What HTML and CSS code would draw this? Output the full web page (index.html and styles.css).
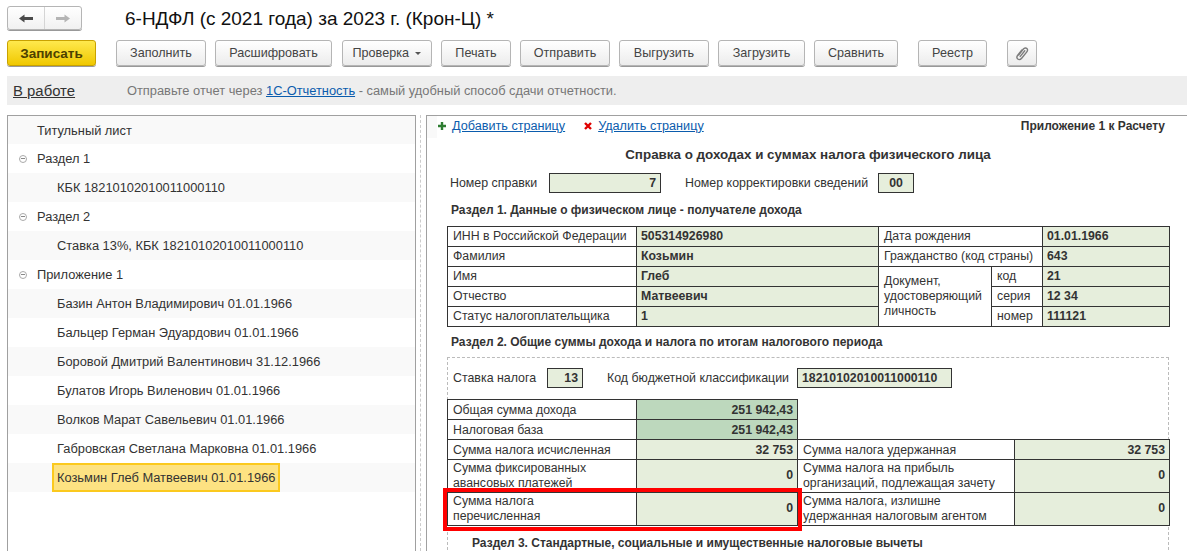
FILE: index.html
```html
<!DOCTYPE html>
<html lang="ru">

<head>
    <meta charset="utf-8">
    <title>6-НДФЛ</title>
    <link rel="stylesheet" href="styles.css">
</head>

<body>
    <div class="title-row">
        <div class="nav-group">
            <div class="nav-btn">
                <svg width="14" height="9" viewBox="0 0 14 9"><path d="M0 4.5 L5.5 0.5 V3 H14 V6 H5.5 V8.5 Z" fill="#4a4a4a"/></svg>
            </div>
            <div class="nav-btn">
                <svg width="14" height="9" viewBox="0 0 14 9"><path d="M14 4.5 L8.5 0.5 V3 H0 V6 H8.5 V8.5 Z" fill="#b4b4b4"/></svg>
            </div>
        </div>
        <div class="doc-title">6-НДФЛ (с 2021 года) за 2023 г. (Крон-Ц) *</div>
    </div>

    <div class="command-bar">
        <button class="btn btn-save">Записать</button>
        <button class="btn w-fill">Заполнить</button>
        <button class="btn w-decode">Расшифровать</button>
        <button class="btn w-check">Проверка <span class="caret"></span></button>
        <button class="btn w-print">Печать</button>
        <button class="btn w-send">Отправить</button>
        <button class="btn w-unload">Выгрузить</button>
        <button class="btn w-load">Загрузить</button>
        <button class="btn w-compare">Сравнить</button>
        <button class="btn w-registry">Реестр</button>
        <button class="btn w-clip">
            <svg width="14" height="15" viewBox="0 0 16 17"><path d="M4.2 10.2 L9.6 3.4 C10.8 1.9 12.6 1.8 13.6 2.8 C14.7 3.9 14.4 5.5 13.3 6.9 L7.6 13.9 C6.4 15.4 4.5 15.8 3.2 14.8 C1.9 13.7 2 11.9 3.1 10.5 L7.9 4.5 M6 11.8 L11.2 5.3" fill="none" stroke="#7c7c7c" stroke-width="1.6" stroke-linecap="round"/></svg>
        </button>
    </div>

    <div class="info-bar">
        <a class="state-link" href="#">В работе</a>
        <span class="info-text">Отправьте отчет через <a href="#">1С-Отчетность</a> - самый удобный способ сдачи отчетности.</span>
    </div>

    <div class="workspace">
        <div class="tree-panel">
            <div class="tree-row">Титульный лист</div>
            <div class="tree-row"><span class="collapse"></span>Раздел 1</div>
            <div class="tree-row child">КБК 18210102010011000110</div>
            <div class="tree-row"><span class="collapse"></span>Раздел 2</div>
            <div class="tree-row child">Ставка 13%, КБК 18210102010011000110</div>
            <div class="tree-row"><span class="collapse"></span>Приложение 1</div>
            <div class="tree-row child">Базин Антон Владимирович 01.01.1966</div>
            <div class="tree-row child">Бальцер Герман Эдуардович 01.01.1966</div>
            <div class="tree-row child">Боровой Дмитрий Валентинович 31.12.1966</div>
            <div class="tree-row child">Булатов Игорь Виленович 01.01.1966</div>
            <div class="tree-row child">Волков Марат Савельевич 01.01.1966</div>
            <div class="tree-row child">Габровская Светлана Марковна 01.01.1966</div>
            <div class="tree-row child"><span class="selected">Козьмин Глеб Матвеевич 01.01.1966</span></div>
        </div>

        <div class="splitter"></div>

        <div class="report-panel">
            <div class="page-actions">
                <span class="corner-cell"></span>
                <svg class="act-icon" width="8" height="8" viewBox="0 0 8 8"><path d="M2.8 0H5.2V2.8H8V5.2H5.2V8H2.8V5.2H0V2.8H2.8Z" fill="#2e7d32"/></svg>
                <a href="#">Добавить страницу</a>
                <svg class="act-icon del-icon" width="8" height="8" viewBox="0 0 8 8"><path d="M1 1 L7 7 M7 1 L1 7" stroke="#e00000" stroke-width="2.4"/></svg>
                <a href="#">Удалить страницу</a>
                <span class="appendix">Приложение 1 к Расчету</span>
            </div>

            <div class="report-title">Справка о доходах и суммах налога физического лица</div>

            <div class="field-row first-fields">
                <span class="num-label">Номер справки</span>
                <span class="input num-input">7</span>
                <span class="corr-label">Номер корректировки сведений</span>
                <span class="input corr-input">00</span>
            </div>

            <div class="section-title">Раздел 1. Данные о физическом лице - получателе дохода</div>

            <table class="grid person">
                <colgroup>
                    <col class="c1"><col class="c2"><col class="c3"><col class="c4"><col class="c5">
                </colgroup>
                <tr><td>ИНН в Российской Федерации</td><td class="val">505314926980</td><td colspan="2">Дата рождения</td><td class="val">01.01.1966</td></tr>
                <tr><td>Фамилия</td><td class="val">Козьмин</td><td colspan="2">Гражданство (код страны)</td><td class="val">643</td></tr>
                <tr><td>Имя</td><td class="val">Глеб</td><td rowspan="3">Документ,<br>удостоверяющий<br>личность</td><td>код</td><td class="val">21</td></tr>
                <tr><td>Отчество</td><td class="val">Матвеевич</td><td>серия</td><td class="val">12 34</td></tr>
                <tr><td>Статус налогоплательщика</td><td class="val">1</td><td>номер</td><td class="val">111121</td></tr>
            </table>

            <div class="section-title second">Раздел 2. Общие суммы дохода и налога по итогам налогового периода</div>

            <div class="dashed-box">
                <div class="field-row rate-fields">
                    <span class="rate-label">Ставка налога</span>
                    <span class="input rate-input">13</span>
                    <span class="kbk-label">Код бюджетной классификации</span>
                    <span class="input kbk-input">18210102010011000110</span>
                </div>

                <table class="grid totals">
                    <colgroup>
                        <col class="t1"><col class="t2"><col class="t3"><col class="t4">
                    </colgroup>
                    <tr><td>Общая сумма дохода</td><td class="val dark num">251 942,43</td><td class="blank" colspan="2"></td></tr>
                    <tr><td>Налоговая база</td><td class="val dark num">251 942,43</td><td class="blank" colspan="2"></td></tr>
                    <tr><td>Сумма налога исчисленная</td><td class="val num">32 753</td><td>Сумма налога удержанная</td><td class="val num">32 753</td></tr>
                    <tr class="tall"><td>Сумма фиксированных<br>авансовых платежей</td><td class="val num">0</td><td>Сумма налога на прибыль<br>организаций, подлежащая зачету</td><td class="val num">0</td></tr>
                    <tr class="tall"><td>Сумма налога<br>перечисленная</td><td class="val num">0</td><td>Сумма налога, излишне<br>удержанная налоговым агентом</td><td class="val num">0</td></tr>
                </table>

                <div class="section-title third">Раздел 3. Стандартные, социальные и имущественные налоговые вычеты</div>
                <div class="red-frame"></div>
            </div>
        </div>
    </div>
</body>

</html>
```

FILE: styles.css
```css
html, body {
    height: 100%;
}

body {
    margin: 0;
    overflow: hidden;
    font-family: 'Liberation Sans', Arial, sans-serif;
    font-size: 12.3px;
    color: #333;
    background: white;
    display: flex;
    flex-direction: column;
}

a {
    color: #0b5cad;
}

.title-row {
    display: flex;
    align-items: center;
    height: 24px;
    margin: 6px 0 0 7px;
}

.nav-group {
    display: flex;
    width: 73px;
    height: 22px;
    border: 1px solid #b5b5b5;
    border-radius: 3px;
    box-shadow: 0 1px 0 #999;
    background: linear-gradient(#fff, #f1f1f1);
}

.nav-btn {
    flex: 1;
    display: flex;
    align-items: center;
    justify-content: center;
}

.nav-btn:first-child {
    border-right: 1px solid #d5d5d5;
}

.doc-title {
    margin: 2px 0 0 43px;
    font-size: 19px;
    color: #111;
}

.command-bar {
    display: flex;
    height: 26px;
    margin: 10px 0 0 7px;
}

.btn {
    height: 26px;
    padding: 0;
    margin-right: 9px;
    border: 1px solid #b5b5b5;
    border-radius: 3px;
    box-shadow: 0 1px 0 #999;
    background: linear-gradient(#fff, #ececec);
    font-family: inherit;
    font-size: 12.6px;
    color: #444;
}

.btn-save {
    width: 89px;
    margin-right: 20px;
    border-color: #c9a200;
    background: linear-gradient(#ffe94d, #f0c800);
    font-size: 13.5px;
    font-weight: bold;
    color: #4d4100;
}

.w-fill { width: 90px; }
.w-decode { width: 117px; margin-right: 10px; }
.w-check { width: 90px; }
.w-print { width: 70px; }
.w-send { width: 90px; }
.w-unload { width: 90px; }
.w-load { width: 87px; }
.w-compare { width: 84px; margin-right: 20px; }
.w-registry { width: 69px; margin-right: 20px; }
.w-clip { width: 30px; display: flex; align-items: center; justify-content: center; }

.caret {
    display: inline-block;
    margin-left: 3px;
    border: 3px solid transparent;
    border-top-color: #555;
    border-bottom: 0;
    vertical-align: middle;
}

.info-bar {
    display: flex;
    align-items: center;
    height: 29px;
    margin: 10px 0 0 7px;
    padding-left: 6px;
    background: #eeeeee;
}

.state-link {
    width: 114px;
    font-size: 14.9px;
    color: #333;
}

.info-text {
    font-size: 12.85px;
    color: #777;
}

.workspace {
    flex: 1;
    display: flex;
    margin: 10px 0 0 7px;
    min-height: 0;
}

.tree-panel {
    width: 407px;
    border: 1px solid #a0a0a0;
    border-bottom: 0;
    font-size: 12.85px;
}

.tree-row {
    display: flex;
    align-items: center;
    height: 29px;
    padding-left: 29px;
}

.tree-row:first-child {
    height: 28px;
}

.tree-row:nth-child(odd) {
    background: #f9f9f9;
}

.tree-row.child {
    padding-left: 49px;
}

.collapse {
    position: relative;
    width: 8px;
    height: 8px;
    margin: 0 10px 0 -18px;
    border: 1px solid #aaa;
    border-radius: 50%;
    box-sizing: border-box;
}

.collapse::after {
    content: "";
    position: absolute;
    left: 1px;
    right: 1px;
    top: 2px;
    height: 1px;
    background: #888;
}

.selected {
    margin-left: -5px;
    padding: 0 3px;
    height: 29px;
    line-height: 25px;
    box-sizing: border-box;
    border: 2px solid #fbc91e;
    background: #fde282;
}

.splitter {
    width: 0;
    margin: 0 5px 0 4px;
    border-left: 1px dashed #ccc;
}

.report-panel {
    flex: 1;
    min-width: 0;
    padding-left: 20px;
    border-top: 1px solid #a0a0a0;
    border-left: 1px solid #a0a0a0;
    overflow: hidden;
}

.page-actions {
    display: flex;
    align-items: center;
    height: 19px;
    margin-left: -20px;
    padding-right: 22px;
    font-size: 12.65px;
}

.corner-cell {
    align-self: flex-start;
    flex: none;
    width: 10px;
    height: 22px;
    background: #f9f9f9;
}

.act-icon {
    flex: none;
    margin: 0 6px 0 0;
}

.page-actions .act-icon:nth-child(2) {
    margin-left: 1px;
}

.del-icon {
    margin-left: 19px;
}

.appendix {
    margin-left: auto;
    font-size: 12px;
    font-weight: bold;
}

.report-title {
    width: 722px;
    margin-top: 12px;
    text-align: center;
    font-size: 13.4px;
    line-height: 16px;
    font-weight: bold;
}

.field-row {
    display: flex;
    align-items: center;
    font-size: 12.4px;
}

.first-fields {
    margin: 10px 0 0 3px;
}

.num-label { width: 99px; }
.corr-label { width: 193px; margin-left: 24px; }

.input {
    flex: none;
    height: 20px;
    box-sizing: border-box;
    border: 1px solid #333;
    background: #e6eedc;
    font-size: 12.3px;
    font-weight: bold;
    padding: 0 4px;
    line-height: 18px;
}

.num-input {
    width: 112px;
    text-align: right;
}

.corr-input {
    width: 36px;
    text-align: center;
}

.section-title {
    margin: 10px 0 0 4px;
    font-size: 12px;
    line-height: 14px;
    font-weight: bold;
}

.grid {
    table-layout: fixed;
    border-collapse: collapse;
    width: 722px;
}

.grid td {
    height: 20px;
    box-sizing: border-box;
    padding: 0 4px 0 5px;
    border: 1px solid #333;
    line-height: 15px;
}

.grid td.val {
    padding-left: 4px;
}

.person {
    margin-top: 9px;
}

.c1 { width: 189px; }
.c2 { width: 242px; }
.c3 { width: 113px; }
.c4 { width: 51px; }
.c5 { width: 127px; }

.val {
    background: #e6eedc;
    font-weight: bold;
}

.dark {
    background: #bdd8bd;
}

.num {
    text-align: right;
}

.section-title.second {
    margin-top: 8px;
}

.dashed-box {
    position: relative;
    width: 722px;
    margin-top: 8px;
    border-top: 1px dashed #bbb;
    border-right: 1px dashed #bbb;
    border-left: 1px dashed #bbb;
    box-sizing: border-box;
    padding-bottom: 20px;
}

.rate-fields {
    margin: 10px 0 0 5px;
}

.rate-label { width: 94px; }
.kbk-label { width: 190px; margin-left: 24px; }

.rate-input {
    width: 36px;
    text-align: right;
}

.kbk-input {
    width: 155px;
}

.totals {
    width: 722px;
    margin: 11px 0 0 -1px;
}

.t1 { width: 189px; }
.t2 { width: 161px; }
.t3 { width: 217px; }
.t4 { width: 155px; }

.totals td {
    padding-top: 1px;
}

.grid td.blank {
    border: 0;
    border-left: 1px solid #333;
}

.totals .tall td {
    height: 33px;
    padding-top: 0;
    line-height: 15.5px;
}

.section-title.third {
    margin: 10px 0 0 24px;
}

.red-frame {
    position: absolute;
    left: -5px;
    top: 130px;
    width: 351px;
    height: 35px;
    border: 4px solid #ff0000;
    pointer-events: none;
}
```
